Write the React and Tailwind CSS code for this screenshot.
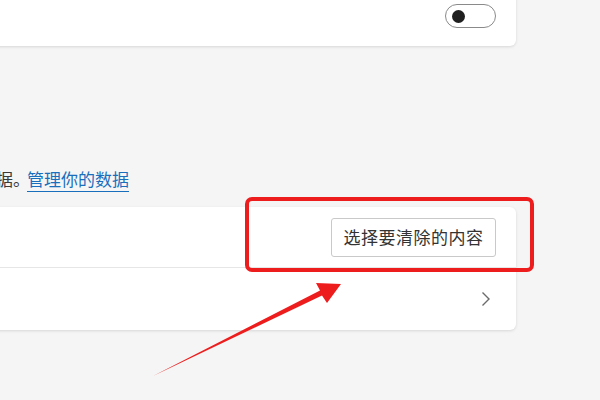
import React from 'react'

const Toggle = () => (
  <div className="w-[51px] h-[24px] rounded-full border border-[#8a8a8a] bg-white flex items-center pl-[6px]">
    <div className="w-[13px] h-[13px] rounded-full bg-[#1f1f1f]" />
  </div>
)

const Chevron = () => (
  <svg width="10" height="16" viewBox="0 0 10 16" fill="none">
    <path d="M1.5 1.5 L8 8 L1.5 14.5" stroke="#6b6b6b" strokeWidth="1.4" />
  </svg>
)

const App = () => {
  return (
    <div
      className="relative w-[600px] h-[400px] overflow-hidden bg-[#f5f5f5]"
      style={{ fontFamily: '"Noto Sans CJK SC", "Noto Sans", sans-serif' }}
    >
      <div className="-ml-4 w-[532px]">
        {/* top card */}
        <div className="-mt-4 h-[62px] bg-white rounded-md shadow-[0_1px_3px_rgba(0,0,0,0.12)] flex items-end justify-end pr-5 pb-[18px]">
          <Toggle />
        </div>

        {/* description */}
        <div className="mt-[121px] pl-[12px] h-[24px] text-[17px] leading-[24px] text-[#3a3a3a] whitespace-nowrap">
          据。
          <span className="ml-[-3px] text-[#1a6fbd] underline underline-offset-[5px] decoration-[#1a6fbd]">
            管理你的数据
          </span>
        </div>

        {/* clear data card */}
        <div className="mt-[16px] bg-white rounded-md shadow-[0_1px_3px_rgba(0,0,0,0.12)]">
          <div className="h-[61px] flex items-center justify-end pr-5 border-b border-[#e6e6e6]">
            <button className="h-[39px] w-[165px] border border-[#c9c9c9] rounded-[3px] bg-white text-[17px] tracking-[0.5px] text-[#333]">
              选择要清除的内容
            </button>
          </div>
          <div className="h-[62px] flex items-center justify-end pr-[25px]">
            <Chevron />
          </div>
        </div>
      </div>

      {/* annotation */}
      <div className="absolute left-[245px] top-[197px] w-[289px] h-[75px] border-[4px] border-[#ee1d1d] rounded-[7px]" />
      <svg className="absolute left-0 top-0" width="600" height="400" viewBox="0 0 600 400">
        <path d="M153 376 L320 290.5 L316 283 L341 284 L327 303 L322 295.5 Z" fill="#ee1d1d" />
      </svg>
    </div>
  )
}

export default App
